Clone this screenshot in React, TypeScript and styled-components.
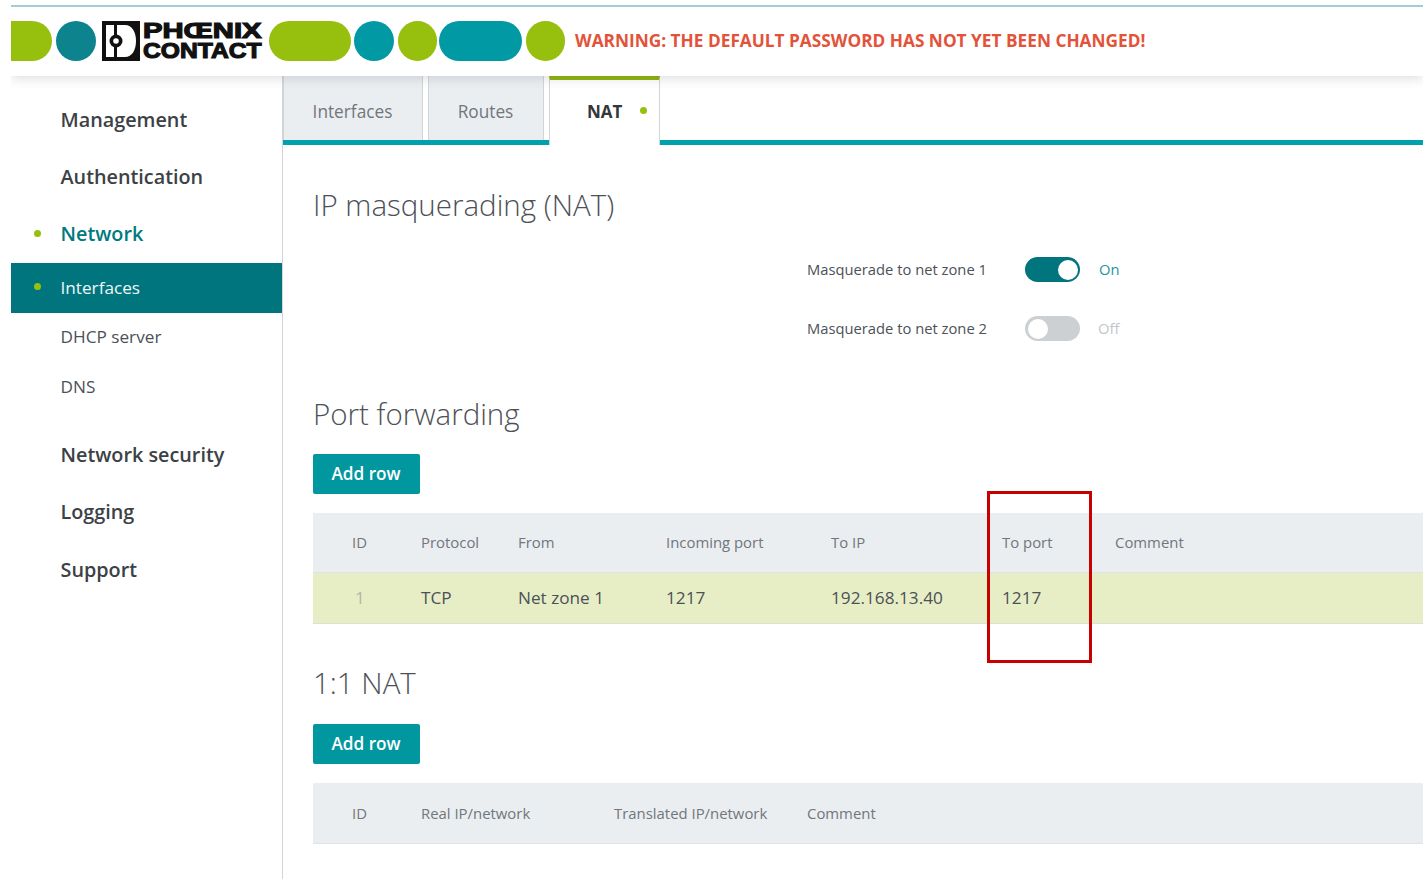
import React from "react";
import styled, { createGlobalStyle } from "styled-components";

const Global = createGlobalStyle`
  html, body { margin: 0; padding: 0; background: #fff; overflow: hidden; }
  body { font-family: "Open Sans", "Liberation Sans", sans-serif; color: #3c4146; }
  * { box-sizing: border-box; }
`;

const Page = styled.div`
  position: relative;
  width: 1423px;
  height: 879px;
  padding: 5px 0 0 11px;
  overflow: hidden;
`;

const TopLine = styled.div`
  height: 2px;
  background: #a3ccd3;
`;

const Header = styled.header`
  position: relative;
  z-index: 2;
  height: 69px;
  display: flex;
  align-items: center;
  padding-bottom: 1px;
  background: #fff;
  box-shadow: 0 3px 10px rgba(60, 70, 80, 0.16);
  clip-path: inset(0 0 -24px 0);
`;

const Blob = styled.div<{ $w: number; $c: string; $ml: number; $flat?: boolean }>`
  width: ${(p) => p.$w}px;
  height: 40px;
  margin-left: ${(p) => p.$ml}px;
  flex: none;
  background: ${(p) => p.$c};
  border-radius: ${(p) => (p.$flat ? "0 20px 20px 0" : "20px")};
`;

const Logo = styled.div`
  width: 162px;
  height: 40px;
  margin-left: 6px;
  flex: none;
  display: flex;
  gap: 3px;
`;

const LogoWords = styled.div`
  display: flex;
  flex-direction: column;
  justify-content: center;
`;

const LogoWord = styled.span<{ $sx: number }>`
  display: block;
  font-family: "Liberation Sans", sans-serif;
  font-weight: 700;
  font-size: 17px;
  line-height: 20px;
  height: 20px;
  color: #111;
  -webkit-text-stroke: 0.9px #111;
  white-space: nowrap;
  transform-origin: left center;
  transform: scale(${(p) => p.$sx}, 1.34);
`;

const Warning = styled.div`
  margin-left: 10px;
  padding-bottom: 1px;
  font-size: 17.25px;
  font-weight: 700;
  color: #e2533a;
  white-space: nowrap;
`;

const Body = styled.div`
  display: flex;
  height: 803px;
`;

const Side = styled.nav`
  width: 272px;
  flex: none;
  border-right: 1px solid #d2d5d8;
  padding-top: 16px;
`;

const MainItem = styled.div<{ $active?: boolean; $h?: number }>`
  position: relative;
  height: ${(p) => p.$h ?? 57}px;
  padding: 0 0 2px 49.5px;
  display: flex;
  align-items: center;
  font-size: 19.8px;
  font-weight: 600;
  color: ${(p) => (p.$active ? "#007a80" : "#3c4146")};
`;

const Dot = styled.span<{ $left: number }>`
  position: absolute;
  left: ${(p) => p.$left}px;
  top: 50%;
  width: 7px;
  height: 7px;
  margin-top: -4.5px;
  border-radius: 50%;
  background: #95c00e;
`;

const SubItem = styled.div<{ $active?: boolean }>`
  position: relative;
  height: 49.5px;
  padding: 0 0 1px 49.5px;
  display: flex;
  align-items: center;
  font-size: 17.2px;
  color: ${(p) => (p.$active ? "#f2f7f8" : "#4c5157")};
  background: ${(p) => (p.$active ? "#00757e" : "transparent")};
`;

const SubGroup = styled.div`
  margin-bottom: 15px;
`;

const Main = styled.main`
  flex: 1;
  min-width: 0;
`;

const Tabs = styled.div`
  display: flex;
  height: 69px;
  border-bottom: 5px solid #00a0ad;
`;

const Tab = styled.div<{ $w: number; $active?: boolean }>`
  position: relative;
  width: ${(p) => p.$w}px;
  height: ${(p) => (p.$active ? "69px" : "64px")};
  margin-right: ${(p) => (p.$active ? 0 : "5px")};
  display: flex;
  align-items: center;
  justify-content: ${(p) => (p.$active ? "flex-start" : "center")};
  padding: ${(p) => (p.$active ? "0 0 3px 37px" : "6px 1px 0 0")};
  font-size: ${(p) => (p.$active ? "17px" : "17.25px")};
  font-weight: ${(p) => (p.$active ? 700 : 400)};
  color: ${(p) => (p.$active ? "#33373b" : "#71767b")};
  background: ${(p) => (p.$active ? "#fff" : "#ebeef1")};
  border-left: 1px solid #d2d5d8;
  border-right: 1px solid #d2d5d8;
  border-top: ${(p) => (p.$active ? "4px solid #8fb50d" : "none")};
  z-index: ${(p) => (p.$active ? 1 : 0)};
`;

const TabDot = styled.span`
  position: absolute;
  right: 12px;
  top: 27px;
  width: 7px;
  height: 7px;
  border-radius: 50%;
  background: #95c00e;
`;

const Content = styled.div`
  padding: 0 0 0 30px;
`;

const H2 = styled.h2<{ $mt: number }>`
  margin: ${(p) => p.$mt}px 0 0;
  font-size: 29.5px;
  line-height: 40px;
  font-weight: 300;
  color: #4c5157;
`;

const Toggles = styled.div`
  display: flex;
  flex-direction: column;
  gap: 33px;
  margin: 31px 0 0 494px;
`;

const ToggleRow = styled.div`
  display: flex;
  align-items: center;
  height: 26px;
`;

const ToggleLabel = styled.span`
  width: 218px;
  font-size: 14.75px;
  color: #4c5157;
  white-space: nowrap;
`;

const Switch = styled.span<{ $on?: boolean }>`
  position: relative;
  width: 55px;
  height: 25px;
  margin-top: 1px;
  border-radius: 13px;
  background: ${(p) => (p.$on ? "#00757e" : "#cdd0d3")};
  &::after {
    content: "";
    position: absolute;
    top: 2.5px;
    left: ${(p) => (p.$on ? "33px" : "2.5px")};
    width: 20px;
    height: 20px;
    border-radius: 50%;
    background: #fff;
  }
`;

const ToggleState = styled.span<{ $on?: boolean }>`
  margin-left: ${(p) => (p.$on ? "19px" : "18px")};
  font-size: 14.75px;
  color: ${(p) => (p.$on ? "#1f959d" : "#c3c6c9")};
`;

const AddRow = styled.button<{ $mt: number }>`
  display: block;
  width: 107px;
  height: 40px;
  margin-top: ${(p) => p.$mt}px;
  padding: 0 1px 1px 0;
  border: none;
  border-radius: 2px;
  background: #00979f;
  color: #fff;
  font: 600 17.2px "Open Sans", sans-serif;
`;

const Table = styled.div<{ $mt: number }>`
  margin-top: ${(p) => p.$mt}px;
`;

const Row = styled.div<{ $cols: string; $kind: "head" | "data"; $h?: number }>`
  display: grid;
  grid-template-columns: ${(p) => p.$cols};
  align-items: center;
  height: ${(p) => p.$h ?? (p.$kind === "head" ? 60 : 51)}px;
  padding-bottom: 1px;
  background: ${(p) => (p.$kind === "head" ? "#ebeef1" : "#e7eec6")};
  border-bottom: 1px solid ${(p) => (p.$kind === "head" ? "#e0e3e4" : "#dcdfd5")};
  font-size: ${(p) => (p.$kind === "head" ? "14.9px" : "17.2px")};
  color: ${(p) => (p.$kind === "head" ? "#71767b" : "#4c5157")};
`;

const IdCell = styled.span<{ $muted?: boolean }>`
  padding-left: ${(p) => (p.$muted ? "42px" : "39px")};
  color: ${(p) => (p.$muted ? "#b3b9a5" : "inherit")};
`;

const Marker = styled.div`
  position: absolute;
  left: 987px;
  top: 491px;
  width: 105px;
  height: 172px;
  border: 3px solid #c80000;
  z-index: 3;
`;

const LogoMark = () => (
  <svg width="38" height="40" viewBox="0 0 38 40">
    <rect width="38" height="40" fill="#111" />
    <rect x="4" y="4" width="8" height="32" fill="#fff" />
    <path d="M15 4h8c7 0 11 7 11 16s-4 16-11 16h-8z" fill="#fff" />
    <circle cx="14" cy="20" r="6.5" fill="#111" />
    <circle cx="14" cy="20" r="2.8" fill="#fff" />
  </svg>
);

const FWD = "108px 97px 148px 165px 171px 113px 1fr";
const NAT = "108px 193px 193px 1fr";

export default function App() {
  return (
    <Page>
      <Global />
      <TopLine />
      <Header>
        <Blob $w={41} $c="#97bf0d" $ml={0} $flat />
        <Blob $w={40} $c="#0c838d" $ml={4} />
        <Logo>
          <LogoMark />
          <LogoWords>
            <LogoWord $sx={1.72}>PHŒNIX</LogoWord>
            <LogoWord $sx={1.45}>CONTACT</LogoWord>
          </LogoWords>
        </Logo>
        <Blob $w={82} $c="#97bf0d" $ml={5} />
        <Blob $w={40} $c="#0099a4" $ml={3} />
        <Blob $w={39} $c="#97bf0d" $ml={4} />
        <Blob $w={83} $c="#0099a4" $ml={2} />
        <Blob $w={39} $c="#97bf0d" $ml={4} />
        <Warning>WARNING: THE DEFAULT PASSWORD HAS NOT YET BEEN CHANGED!</Warning>
      </Header>
      <Body>
        <Side>
          <MainItem>Management</MainItem>
          <MainItem>Authentication</MainItem>
          <MainItem $active>
            <Dot $left={23} />
            Network
          </MainItem>
          <SubGroup>
            <SubItem $active>
              <Dot $left={23} />
              Interfaces
            </SubItem>
            <SubItem>DHCP server</SubItem>
            <SubItem>DNS</SubItem>
          </SubGroup>
          <MainItem>Network security</MainItem>
          <MainItem $h={58}>Logging</MainItem>
          <MainItem>Support</MainItem>
        </Side>
        <Main>
          <Tabs>
            <Tab $w={140}>Interfaces</Tab>
            <Tab $w={116}>Routes</Tab>
            <Tab $w={111} $active>
              NAT
              <TabDot />
            </Tab>
          </Tabs>
          <Content>
            <H2 $mt={40}>IP masquerading (NAT)</H2>
            <Toggles>
              <ToggleRow>
                <ToggleLabel>Masquerade to net zone 1</ToggleLabel>
                <Switch $on />
                <ToggleState $on>On</ToggleState>
              </ToggleRow>
              <ToggleRow>
                <ToggleLabel>Masquerade to net zone 2</ToggleLabel>
                <Switch />
                <ToggleState>Off</ToggleState>
              </ToggleRow>
            </Toggles>
            <H2 $mt={53}>Port forwarding</H2>
            <AddRow $mt={20}>Add row</AddRow>
            <Table $mt={19}>
              <Row $cols={FWD} $kind="head">
                <IdCell>ID</IdCell>
                <span>Protocol</span>
                <span>From</span>
                <span>Incoming port</span>
                <span>To IP</span>
                <span>To port</span>
                <span>Comment</span>
              </Row>
              <Row $cols={FWD} $kind="data">
                <IdCell $muted>1</IdCell>
                <span>TCP</span>
                <span>Net zone 1</span>
                <span>1217</span>
                <span>192.168.13.40</span>
                <span>1217</span>
                <span />
              </Row>
            </Table>
            <H2 $mt={39}>1:1 NAT</H2>
            <AddRow $mt={21}>Add row</AddRow>
            <Table $mt={19}>
              <Row $cols={NAT} $kind="head" $h={61}>
                <IdCell>ID</IdCell>
                <span>Real IP/network</span>
                <span>Translated IP/network</span>
                <span>Comment</span>
              </Row>
            </Table>
          </Content>
        </Main>
      </Body>
      <Marker />
    </Page>
  );
}
